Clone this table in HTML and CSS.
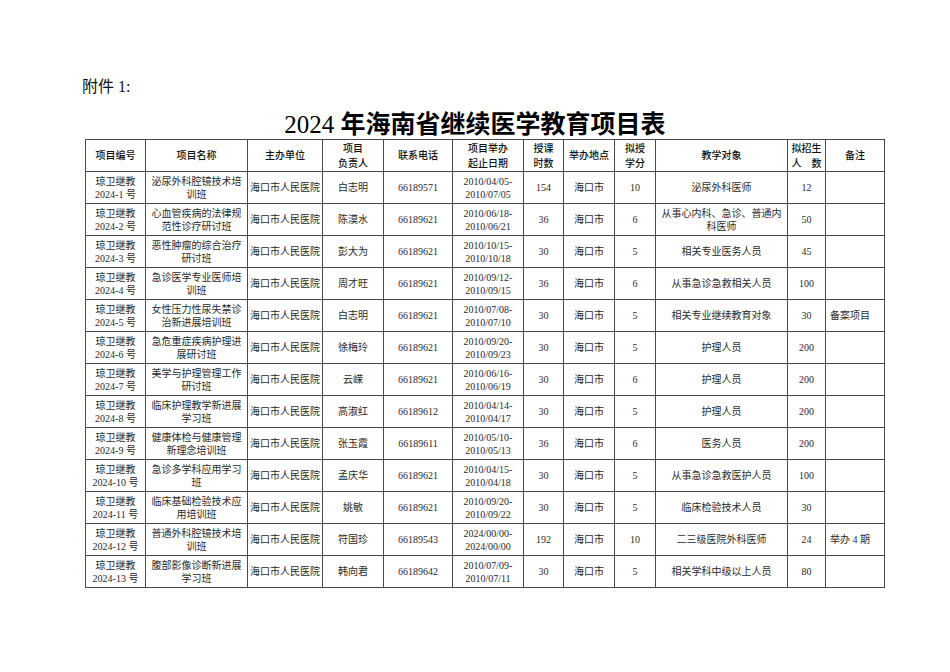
FILE: index.html
```html
<!DOCTYPE html>
<html lang="zh">
<head>
<meta charset="utf-8">
<link rel="stylesheet" href="styles.css">
</head>
<body>
<div class="page">
  <div class="annex">附件 1:</div>
  <h1 class="title"><span class="num">2024</span> 年海南省继续医学教育项目表</h1>
  <table class="grid">
    <colgroup>
      <col class="c1"><col class="c2"><col class="c3"><col class="c4"><col class="c5"><col class="c6">
      <col class="c7"><col class="c8"><col class="c9"><col class="c10"><col class="c11"><col class="c12">
    </colgroup>
    <thead>
      <tr>
        <th>项目编号</th><th>项目名称</th><th>主办单位</th><th>项目<br>负责人</th><th>联系电话</th>
        <th>项目举办<br>起止日期</th><th>授课<br>时数</th><th>举办地点</th><th>拟授<br>学分</th>
        <th>教学对象</th><th>拟招生<br>人　数</th><th>备注</th>
      </tr>
    </thead>
    <tbody>
      <tr><td>琼卫继教<br>2024-1 号</td><td>泌尿外科腔镜技术培<br>训班</td><td>海口市人民医院</td><td>白志明</td><td>66189571</td><td>2010/04/05-<br>2010/07/05</td><td>154</td><td>海口市</td><td>10</td><td>泌尿外科医师</td><td>12</td><td class="note"></td></tr>
      <tr><td>琼卫继教<br>2024-2 号</td><td>心血管疾病的法律规<br>范性诊疗研讨班</td><td>海口市人民医院</td><td>陈漠水</td><td>66189621</td><td>2010/06/18-<br>2010/06/21</td><td>36</td><td>海口市</td><td>6</td><td>从事心内科、急诊、普通内<br>科医师</td><td>50</td><td class="note"></td></tr>
      <tr><td>琼卫继教<br>2024-3 号</td><td>恶性肿瘤的综合治疗<br>研讨班</td><td>海口市人民医院</td><td>彭大为</td><td>66189621</td><td>2010/10/15-<br>2010/10/18</td><td>30</td><td>海口市</td><td>5</td><td>相关专业医务人员</td><td>45</td><td class="note"></td></tr>
      <tr><td>琼卫继教<br>2024-4 号</td><td>急诊医学专业医师培<br>训班</td><td>海口市人民医院</td><td>周才旺</td><td>66189621</td><td>2010/09/12-<br>2010/09/15</td><td>36</td><td>海口市</td><td>6</td><td>从事急诊急救相关人员</td><td>100</td><td class="note"></td></tr>
      <tr><td>琼卫继教<br>2024-5 号</td><td>女性压力性尿失禁诊<br>治新进展培训班</td><td>海口市人民医院</td><td>白志明</td><td>66189621</td><td>2010/07/08-<br>2010/07/10</td><td>30</td><td>海口市</td><td>5</td><td>相关专业继续教育对象</td><td>30</td><td class="note">备案项目</td></tr>
      <tr><td>琼卫继教<br>2024-6 号</td><td>急危重症疾病护理进<br>展研讨班</td><td>海口市人民医院</td><td>徐梅玲</td><td>66189621</td><td>2010/09/20-<br>2010/09/23</td><td>30</td><td>海口市</td><td>5</td><td>护理人员</td><td>200</td><td class="note"></td></tr>
      <tr><td>琼卫继教<br>2024-7 号</td><td>美学与护理管理工作<br>研讨班</td><td>海口市人民医院</td><td>云嵘</td><td>66189621</td><td>2010/06/16-<br>2010/06/19</td><td>30</td><td>海口市</td><td>6</td><td>护理人员</td><td>200</td><td class="note"></td></tr>
      <tr><td>琼卫继教<br>2024-8 号</td><td>临床护理教学新进展<br>学习班</td><td>海口市人民医院</td><td>高淑红</td><td>66189612</td><td>2010/04/14-<br>2010/04/17</td><td>30</td><td>海口市</td><td>5</td><td>护理人员</td><td>200</td><td class="note"></td></tr>
      <tr><td>琼卫继教<br>2024-9 号</td><td>健康体检与健康管理<br>新理念培训班</td><td>海口市人民医院</td><td>张玉霞</td><td>66189611</td><td>2010/05/10-<br>2010/05/13</td><td>36</td><td>海口市</td><td>6</td><td>医务人员</td><td>200</td><td class="note"></td></tr>
      <tr><td>琼卫继教<br>2024-10 号</td><td>急诊多学科应用学习<br>班</td><td>海口市人民医院</td><td>孟庆华</td><td>66189621</td><td>2010/04/15-<br>2010/04/18</td><td>30</td><td>海口市</td><td>5</td><td>从事急诊急救医护人员</td><td>100</td><td class="note"></td></tr>
      <tr><td>琼卫继教<br>2024-11 号</td><td>临床基础检验技术应<br>用培训班</td><td>海口市人民医院</td><td>姚敏</td><td>66189621</td><td>2010/09/20-<br>2010/09/22</td><td>30</td><td>海口市</td><td>5</td><td>临床检验技术人员</td><td>30</td><td class="note"></td></tr>
      <tr><td>琼卫继教<br>2024-12 号</td><td>普通外科腔镜技术培<br>训班</td><td>海口市人民医院</td><td>符国珍</td><td>66189543</td><td>2024/00/00-<br>2024/00/00</td><td>192</td><td>海口市</td><td>10</td><td>二三级医院外科医师</td><td>24</td><td class="note">举办 4 期</td></tr>
      <tr><td>琼卫继教<br>2024-13 号</td><td>腹部影像诊断新进展<br>学习班</td><td>海口市人民医院</td><td>韩向君</td><td>66189642</td><td>2010/07/09-<br>2010/07/11</td><td>30</td><td>海口市</td><td>5</td><td>相关学科中级以上人员</td><td>80</td><td class="note"></td></tr>
    </tbody>
  </table>
</div>
</body>
</html>
```

FILE: styles.css
```css
html, body {
  margin: 0;
  padding: 0;
  background: #ffffff;
}

.page {
  padding: 78px 0 0 85px;
  font-family: "Liberation Serif", "Noto Sans CJK SC", serif;
  color: #222222;
}

.annex {
  margin-left: -3px;
  font-size: 16px;
  line-height: 18px;
  color: #111111;
}

.title {
  width: 780px;
  margin: 14px 0 0 0;
  text-align: center;
  font-family: "Liberation Serif", "Noto Sans CJK SC", serif;
  font-weight: bold;
  font-size: 25px;
  line-height: 29px;
  color: #000000;
}

.title .num {
  font-weight: normal;
}

.grid {
  margin-top: 0;
  width: 799px;
  table-layout: fixed;
  border-collapse: collapse;
}

.c1 { width: 60px; }
.c2 { width: 102px; }
.c3 { width: 75px; }
.c4 { width: 61px; }
.c5 { width: 69px; }
.c6 { width: 71px; }
.c7 { width: 40px; }
.c8 { width: 51px; }
.c9 { width: 41px; }
.c10 { width: 132px; }
.c11 { width: 38px; }
.c12 { width: 59px; }

.grid th,
.grid td {
  border: 1px solid #4a4a4a;
  height: 31px;
  padding: 0 2px;
  text-align: center;
  vertical-align: middle;
  font-size: 10px;
  line-height: 13px;
  white-space: nowrap;
  overflow: hidden;
}

.grid th {
  font-family: "Noto Sans CJK SC", sans-serif;
  font-weight: 500;
  color: #111111;
  line-height: 14.5px;
}

.grid td {
  font-family: "Liberation Serif", "Noto Sans CJK SC", serif;
  font-weight: normal;
  color: #2a2a2a;
}

.grid td.note {
  text-align: left;
  padding-left: 4px;
}
```
